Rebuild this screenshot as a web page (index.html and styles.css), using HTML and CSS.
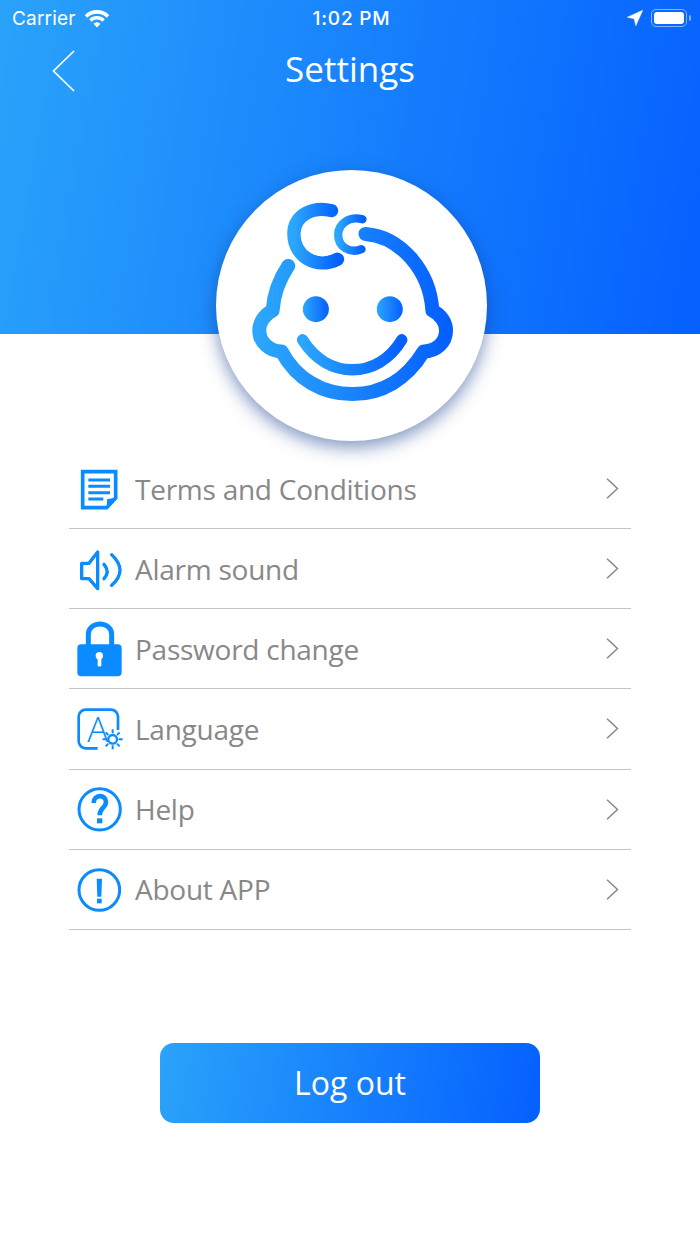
FILE: index.html
```html
<!DOCTYPE html>
<html lang="en">
<head>
  <meta charset="UTF-8">
  <title>Settings</title>
  <link rel="stylesheet" href="styles.css">
</head>
<body>
  <svg class="defs" width="0" height="0">
    <defs>
      <linearGradient id="brand">
        <stop offset="0" stop-color="#2ba6fb"/>
        <stop offset="1" stop-color="#0560ff"/>
      </linearGradient>
    </defs>
  </svg>

  <div class="page">
    <header class="header">
      <div class="status-bar">
        <div class="status-left">
          <span>Carrier</span>
          <svg class="wifi" width="26" height="19" viewBox="0 0 26 19">
            <path d="M2 7.4 C8 1.4 18 1.4 24 7.4" fill="none" stroke="#fff" stroke-width="3.6"/>
            <path d="M6.4 11.4 C10 7.8 16 7.8 19.6 11.4" fill="none" stroke="#fff" stroke-width="3.6"/>
            <path d="M9.4 14.8 C11.6 12.6 14.4 12.6 16.6 14.8 L13 18.6 Z" fill="#fff"/>
          </svg>
        </div>
        <div class="status-time">1:02 PM</div>
        <div class="status-right">
          <svg width="16" height="16" viewBox="0 0 16 16">
            <path d="M15.7 .3 L.3 7.2 L7.2 8.8 L8.8 15.7 Z" fill="#fff" stroke="#fff" stroke-width=".5"/>
          </svg>
          <div class="battery"><span class="battery-level"></span></div>
          <span class="battery-nub"></span>
        </div>
      </div>
      <div class="nav-bar">
        <svg class="back" width="24" height="42" viewBox="0 0 24 42">
          <path d="M22 1 L1.5 21 L22 41" fill="none" stroke="#fff" stroke-width="1.7"/>
        </svg>
        <h1 class="title">Settings</h1>
      </div>
    </header>

    <div class="avatar">
      <svg width="271" height="271" viewBox="48 30 814 814">
        <g fill="none" stroke="url(#brand)" stroke-linecap="round" stroke-linejoin="round">
          <path stroke-width="40" d="M395 152 C340 138 282 165 282 222 C282 290 350 330 413 298"/>
          <path stroke-width="25" d="M488 178 C450 168 415 190 415 225 C415 260 450 282 485 268"/>
          <path stroke-width="42" d="M265 318 C240 355 222 395 218 452 C192 465 178 490 178 512 C178 548 210 575 245 575 C290 660 370 703 458 703 C545 703 620 660 672 575 C710 575 739 548 739 512 C739 490 725 465 698 452 C690 330 600 230 497 222"/>
          <path stroke-width="34" d="M308 540 C345 600 400 630 458 630 C515 630 570 600 606 540"/>
        </g>
        <circle cx="348" cy="448" r="39" fill="url(#brand)"/>
        <circle cx="570" cy="448" r="39" fill="url(#brand)"/>
      </svg>
    </div>

    <main class="content">
      <ul class="menu">
        <li class="menu-item">
          <svg class="menu-icon" viewBox="0 0 150 150">
            <path class="line" stroke-width="11" d="M23 23 H122 V102 L95 131 H23 Z"/>
            <path class="solid" d="M127 100 L96 136 V106 Z"/>
            <path class="line" stroke-width="9" d="M40 48 H105 M40 67 H105 M40 86 H105 M40 105 H85"/>
          </svg>
          <span class="menu-label">Terms and Conditions</span>
          <svg class="chevron" width="13" height="21" viewBox="0 0 13 21"><path d="M1 .7 L11.5 10.5 L1 20.3"/></svg>
        </li>
        <li class="menu-item">
          <svg class="menu-icon" viewBox="0 0 150 150">
            <path class="line" stroke-width="10" stroke-linejoin="round" d="M20 58 H42 L68 24 V134 L42 104 H20 Z"/>
            <path class="line" stroke-width="10" stroke-linecap="round" d="M87 61 Q106 83 87 104 M110 32 Q160 80 110 124"/>
          </svg>
          <span class="menu-label">Alarm sound</span>
          <svg class="chevron" width="13" height="21" viewBox="0 0 13 21"><path d="M1 .7 L11.5 10.5 L1 20.3"/></svg>
        </li>
        <li class="menu-item">
          <svg class="menu-icon" viewBox="0 0 150 150">
            <path class="line" stroke-width="15" d="M40 70 V30 a35 30 0 0 1 70 0 V70"/>
            <rect class="solid" x="7" y="61" width="133" height="96" rx="12"/>
            <circle cx="73" cy="95" r="11" fill="#fff"/>
            <rect x="68" y="97" width="11" height="30" fill="#fff"/>
          </svg>
          <span class="menu-label">Password change</span>
          <svg class="chevron" width="13" height="21" viewBox="0 0 13 21"><path d="M1 .7 L11.5 10.5 L1 20.3"/></svg>
        </li>
        <li class="menu-item">
          <svg class="menu-icon" viewBox="0 0 150 150">
            <path class="line" stroke-width="8" d="M129 78 V38 a21 21 0 0 0 -21 -21 H32 a21 21 0 0 0 -21 21 V112 a21 21 0 0 0 21 21 H68"/>
            <text class="icon-letter" x="37" y="113">A</text>
            <circle class="line" stroke-width="7" cx="113" cy="106" r="13"/>
            <path class="line" stroke-width="6" d="M113 88 V76 M113 124 V136 M95 106 H83 M131 106 H143 M100 93 L92 85 M126 93 L134 85 M100 119 L92 127 M126 119 L134 127"/>
          </svg>
          <span class="menu-label">Language</span>
          <svg class="chevron" width="13" height="21" viewBox="0 0 13 21"><path d="M1 .7 L11.5 10.5 L1 20.3"/></svg>
        </li>
        <li class="menu-item">
          <svg class="menu-icon" viewBox="0 0 150 150">
            <circle class="line" stroke-width="9" cx="74" cy="76" r="62"/>
            <path class="line" stroke-width="14" d="M56 57 C56 30 93 30 93 54 C93 72 74 70 74 94"/>
            <rect class="solid" x="66" y="103" width="16" height="15"/>
          </svg>
          <span class="menu-label">Help</span>
          <svg class="chevron" width="13" height="21" viewBox="0 0 13 21"><path d="M1 .7 L11.5 10.5 L1 20.3"/></svg>
        </li>
        <li class="menu-item">
          <svg class="menu-icon" viewBox="0 0 150 150">
            <circle class="line" stroke-width="9" cx="73" cy="78" r="61"/>
            <path class="solid" d="M65 44 H81 L79 98 H67 Z"/>
            <rect class="solid" x="66" y="104" width="14" height="14"/>
          </svg>
          <span class="menu-label">About APP</span>
          <svg class="chevron" width="13" height="21" viewBox="0 0 13 21"><path d="M1 .7 L11.5 10.5 L1 20.3"/></svg>
        </li>
      </ul>

      <button class="logout">Log out</button>
    </main>
  </div>
</body>
</html>
```

FILE: styles.css
```css
* {
  box-sizing: border-box;
}

body {
  margin: 0;
  background: #fff;
  color: #888;
  font-family: "Open Sans", "Noto Sans", sans-serif;
}

.defs {
  display: block;
  height: 0;
}

.page {
  position: relative;
  width: 700px;
  height: 1244px;
  overflow: hidden;
}

.header {
  height: 334px;
  background: linear-gradient(100deg, #2aa3fa 0%, #0560ff 100%);
  color: #fff;
}

.status-bar {
  display: grid;
  grid-template-columns: 1fr auto 1fr;
  align-items: center;
  height: 36px;
  padding: 0 9px 0 12px;
  font-family: Inter, Roboto, sans-serif;
  font-size: 19px;
}

.status-left {
  display: flex;
  align-items: center;
  gap: 8px;
  letter-spacing: 0.2px;
}

.status-time {
  font-weight: 500;
  letter-spacing: 0.8px;
}

.status-right {
  display: flex;
  align-items: center;
  justify-content: flex-end;
}

.battery {
  width: 36px;
  height: 18px;
  margin-left: 8px;
  padding: 2px;
  border: 1px solid rgba(255, 255, 255, 0.5);
  border-radius: 5px;
}

.battery-level {
  display: block;
  height: 100%;
  background: #fff;
  border-radius: 3px;
}

.battery-nub {
  width: 2px;
  height: 6px;
  margin-left: 2px;
  background: rgba(255, 255, 255, 0.5);
  border-radius: 0 2px 2px 0;
}

.nav-bar {
  display: flex;
  justify-content: center;
  position: relative;
}

.back {
  position: absolute;
  left: 52px;
  top: 14px;
}

.title {
  margin: 0;
  font-size: 35px;
  font-weight: 400;
  line-height: 66px;
}

.avatar {
  position: absolute;
  left: 216px;
  top: 170px;
  width: 271px;
  height: 271px;
  background: #fff;
  border-radius: 50%;
  box-shadow: 0 6px 18px rgba(20, 60, 140, 0.55);
}

.avatar svg {
  display: block;
}

.content {
  padding-top: 115px;
}

.menu {
  list-style: none;
  margin: 0 69px;
  padding: 0;
}

.menu-item {
  display: flex;
  align-items: center;
  height: 80.15px;
  padding-left: 6px;
  border-bottom: 1px solid #c4c4c4;
}

.menu-icon {
  flex-shrink: 0;
  width: 50px;
  height: 50px;
  overflow: visible;
}

.line {
  fill: none;
  stroke: #0a8bff;
}

.solid {
  fill: #0a8bff;
}

.icon-letter {
  fill: #0a8bff;
  font-family: "Open Sans", sans-serif;
  font-size: 105px;
  font-weight: 300;
}

.menu-label {
  flex: 1;
  margin-left: 10px;
  font-size: 28px;
  letter-spacing: -0.25px;
}

.chevron {
  margin-right: 12px;
}

.chevron path {
  fill: none;
  stroke: #888;
  stroke-width: 1.5;
}

.logout {
  display: block;
  width: 380px;
  height: 80px;
  margin: 113px auto 0;
  border: none;
  border-radius: 14px;
  background: linear-gradient(100deg, #2aa3fa 0%, #0560ff 100%);
  color: #fff;
  font-family: inherit;
  font-size: 32px;
}
```
